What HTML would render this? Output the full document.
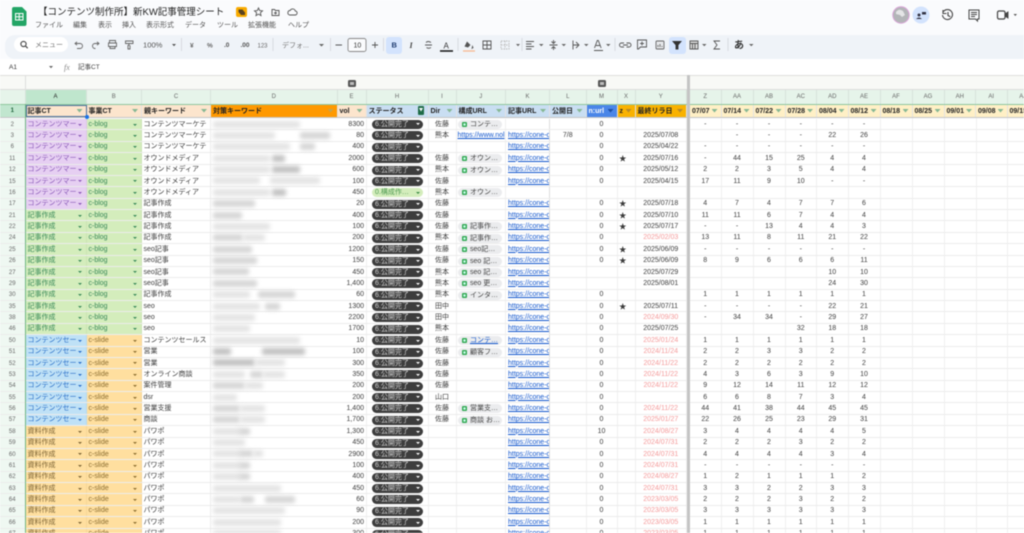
<!DOCTYPE html>
<html lang="ja"><head><meta charset="utf-8"><title>新KW記事管理シート</title>
<style>
*{box-sizing:border-box;margin:0;padding:0}
html,body{width:1024px;height:533px;overflow:hidden;background:#fff}
body{font:7px/11px "Liberation Sans","Noto Sans CJK JP",sans-serif;color:#333}
#w{position:relative;width:1024px;height:533px;overflow:hidden;filter:blur(.5px);background:#fafbfd}
.t{position:absolute;white-space:nowrap}
#bar{position:absolute;left:5px;top:34.5px;width:1019px;height:24px;background:#eff3f8;border-radius:10px 0 0 10px}
#sr{position:absolute;left:14px;top:37px;width:54px;height:15px;background:#fff;border-radius:8px}
#on1,#on2{position:absolute;top:36.5px;height:17px;background:#d3e3fd;border-radius:3px}
#on1{left:386px;width:16px}#on2{left:669px;width:17px}
#fb{position:absolute;left:0;top:59px;width:1024px;height:16px;background:#fff}
#ic{position:absolute;left:0;top:0}
#grp{position:absolute;left:0;top:75px;width:1024px;height:15px;background:#f8f9f6;border-top:1px solid #dfdfdc;border-bottom:1px solid #dcdcdc}
#grp0{position:absolute;left:25px;top:75px;width:1px;height:15px;background:#ddd}
.g{position:absolute;top:79.5px;width:7.5px;height:7.5px;background:#555;border-radius:1.5px}
.g:after{content:"";position:absolute;left:2px;top:2px;width:3.5px;height:3.5px;background:#bbb}
.r,#c,#h{display:grid;grid-template-columns:25.5px 61px 55.5px 69px 126.5px 29px 62px 28px 49.5px 44px 36.5px 31px 18px 51.5px 3px 31.5px 32px 32px 31.5px 31.5px 32px 32px 32px 31.5px 31.5px 31.5px;width:1039px}
#c{position:absolute;left:0;top:90px;height:14px;background:#e6f4ea;color:#666;font-size:6px;line-height:15px;text-align:center}
#c i{font-style:normal;border-right:1px solid #d6e3da}
#c i:nth-child(2){background:#bfe6cd;color:#222}
#h{position:absolute;left:0;top:104px;height:12.5px;font-weight:bold;line-height:11.5px;color:#222;border-top:1px solid #8fc79f}
#h i{font-style:normal;position:relative;padding:1px 0 0 2px;white-space:nowrap;overflow:hidden;border-right:1px solid #e2e2e2}
#h i:after{content:"";position:absolute;right:3px;top:4px;width:6px;height:3.5px;background:var(--f,#86b894);clip-path:polygon(0 0,100% 0,50% 100%)}
#h i:first-child:after,#h i:nth-child(15):after{display:none}
#h i:first-child{background:#c1e6cf;text-align:center;font-size:6px;color:#175c34;padding:1px 0 0}
.o{background:#fce5cd}.b{background:#c9def2}.y{background:#fff0c6}
#fz1{position:absolute;left:0;top:116.5px;width:1024px;height:1.7px;background:#c6c6c6}
#fz2{position:absolute;left:687px;top:75px;width:3px;height:458px;background:#c4c4c4}
#sel{position:absolute;left:25.5px;top:104.5px;width:61px;height:12px;border:1px solid #4a6f9b}
#dot{position:absolute;left:85px;top:114.5px;width:4px;height:4px;border-radius:50%;background:#1a73e8}
#d{position:absolute;left:0;top:119px;width:1024px}
.r{height:11.38px;border-bottom:1px solid #ececec;background:#fff;line-height:10.6px}
.r i{font-style:normal;position:relative;white-space:nowrap;overflow:hidden;padding:.7px 1.5px 0;color:#3c3c3c;border-right:1px solid #efefef;text-align:center}
.r i:first-child{background:#eff8f2;color:#666;font-size:6px;padding:.7px 0 0}
.r i:nth-child(2),.r i:nth-child(3),.r i:nth-child(4),.r i:nth-child(9),.r i:nth-child(10),.r i:nth-child(7){text-align:left}
.r i:nth-child(6){text-align:right}
.r i:nth-child(13){text-align:left;font-size:7.5px}
.r i:nth-child(5){overflow:visible;border:0}
.r i:nth-child(15){background:#c4c4c4;padding:0}
.r i:nth-child(7){padding:1px 0 0 5.5px}
.r i:nth-child(9){padding:1px 0 0 1px}
.r i:nth-child(10){padding-left:2px;border-right-color:#ddd}
i.p,i.gc,i.u,i.z,i.gb,i.gs{padding-left:2px!important;border-right-color:rgba(0,0,0,.04)!important}
i.p{background:#e6cff2;color:#8a5ab8!important}
i.gc{background:#d4edbc;color:#3a8a5a!important}
i.u{background:#bfe1f6;color:#2a6fc8!important}
i.z{background:#ffdf9f;color:#7d6536!important}
i.gb{background:#d4edbc;color:#3a8a5a!important}
i.gs{background:#ffdf9f;color:#8d6f32!important}
i.p:after,i.gc:after,i.u:after,i.z:after,i.gb:after,i.gs:after{content:"";position:absolute;right:3.5px;top:4.5px;border:solid transparent;border-width:2.6px 2px 0;border-top-color:currentColor}
i.gb:after,i.gs:after{right:4.5px}
.s,.v{display:block;width:51px;height:9px;border-radius:4.5px;background:#3d3d3d;color:#cfcfcf;font-weight:normal;line-height:9.5px;padding-left:3px;position:relative}
.v{background:#d4edbc;color:#4f9a52}
.s:after,.v:after{content:"";position:absolute;right:3.5px;top:3.4px;border:solid transparent;border-width:2.4px 2px 0;border-top-color:#fff}
.v:after{border-top-color:#3b8a45}
em{display:block;font-style:normal;width:44px;height:9px;border-radius:4.5px;background:#ebecee;color:#444;line-height:9.5px;padding-left:12.5px;position:relative}
em:before{content:"";position:absolute;left:4px;top:2px;width:5px;height:5px;border-radius:1px;background:#cfe;box-shadow:inset 0 0 0 1.4px #34a853}
a{color:#1155cc;text-decoration:underline}
.x{color:#f49a9a!important}
u{position:absolute;top:1.5px;height:7px;background:#e4e4e4;filter:blur(2.2px);text-decoration:none;border-radius:2px}
u.m{background:#d6d6d6}u.k{background:#c2c2c2}
.vl{position:absolute;top:118px;width:1px;height:415px;background:#efefef}
#lgrn{position:absolute;left:25px;top:104px;width:1px;height:429px;background:#6fb683}
</style></head><body><div id="w">
<div id="bar"></div><div id="sr"></div><div id="on1"></div><div id="on2"></div><div id="fb"></div>

<svg id="ic" width="1024" height="76" viewBox="0 0 1024 76" fill="none" stroke="#666" stroke-width=".9" font-family="'Liberation Sans','Noto Sans CJK JP',sans-serif">
<path d="M12 9q0-2 2-2h8l4.500 4.500V24q0 2-2 2H14q-2 0-2-2z" fill="#23a566" stroke="none"/>
<path d="M15.500 13.500h7.500v6.500h-7.500zM15.500 16.700h7.500M19.200 13.500v6.500" stroke="#fff" stroke-width="1"/>
<rect x="236" y="7" width="11" height="10" rx="2" fill="#f9ab00" stroke="none"/>
<path d="M238.500 9.500h4l2.500 3v2.500h-4l-2.500-3z" fill="#5a4320" stroke="none"/>
<path d="M258.500 8l1.200 2.600 2.800.3-2.100 1.900.6 2.800-2.500-1.500-2.500 1.500.6-2.800-2.100-1.900 2.800-.3z" stroke="#555"/>
<path d="M272 9.500h2.500l1 1h3.500v5h-7zM275.500 11.500v3M274 13h3" stroke="#555"/>
<path d="M289.500 15h5.500a2 2 0 0 0 .3-4 2.800 2.800 0 0 0-5.200-.5 2.300 2.300 0 0 0-.6 4.500z" stroke="#555"/>
<circle cx="23.500" cy="44" r="2.600" stroke="#444" stroke-width="1.100"/><path d="M25.500 46l2.200 2.200" stroke="#444" stroke-width="1.200"/>
<path d="M75.500 43.500h4.500a2.500 2.500 0 0 1 0 5h-3M77 41.800l-2 1.700 2 1.700"/>
<path d="M98.500 43.500h-3.500a2.500 2.500 0 0 0 0 5h.5M97 41.800l2 1.700-2 1.700"/>
<path d="M109.500 43v-2.500h6V43M108.500 43h8v3.500h-8zM110 46v2.500h5V46"/>
<path d="M125.500 41h7.500v2.500h-7.500zM129 43.500v1.800h-1v3.700h2v-3.700"/>
<path d="M172 44h4l-2 2.200z" fill="#555" stroke="none"/>
<path d="M181.500 38v13M273 38v13M330.500 38v13M383.500 38v13M458 38v13M522 38v13M615 38v13M728 38v13" stroke="#d5d8dd"/>
<path d="M319 44h5l-2.500 2.500zM516 44h4l-2 2.200zM539 44h4.500l-2.200 2.200zM561.500 44h4.500l-2.200 2.200zM584 44h4.500l-2.200 2.200zM606 44h4.500l-2.200 2.200zM702 44h4.500l-2.200 2.200zM749 44h4.500l-2.200 2.200z" fill="#666" stroke="none"/>
<path d="M335.500 45h6.500M372 45h6M375 42v6" stroke="#555"/>
<rect x="348" y="38.500" width="18" height="13" rx="2" stroke="#888" fill="#fafbfd"/>
<path d="M425 45h7M426 42.500q2-2 5 0M426.500 47.500q2 1.500 4.500 0" stroke="#555"/>
<path d="M440 51h13" stroke="#111" stroke-width="1.500"/>
<path d="M463 51h12" stroke="#f7b98f" stroke-width="1.300"/>
<path d="M467 41.500l3.500 3.500-2.500 2.500-3.500-1z" fill="#555" stroke="none"/><path d="M472.500 46.500l.5 1.200-.9.500z" fill="#555" stroke="#555"/>
<path d="M483 41h8v8h-8zM483 45h8M487 41v8" stroke="#555"/>
<path d="M501 41h8v8h-8zM505 41v8M501 45h8" stroke="#bbb" stroke-dasharray="1.500 1"/>
<path d="M526 41.500h8M526 44h5.500M526 46.500h8M526 49h5.500" stroke="#555"/>
<path d="M549.500 45h8M553.500 40v3M553.500 47v3M551.500 41.500l2 2 2-2M551.500 48.500l2-2 2 2" stroke="#555"/>
<path d="M573 40.500v9M576 42l3 3-3 3M573 45h5" stroke="#555"/>
<path d="M594.500 48l2.800-7.500h1l2.800 7.500M596 45.500h4M594 50.500h9" stroke="#555"/>
<path d="M624 43h-2.500a2 2 0 0 0 0 4h2.500M626.500 43h2.500a2 2 0 0 1 0 4h-2.500M623 45h5" stroke="#555"/>
<path d="M637.500 40h9v7h-6l-2 2h-1zM642 41.500v4M640 43.500h4" stroke="#555"/>
<rect x="656" y="41" width="8" height="8" rx="1" fill="#e5e7ea"/><path d="M658 47v-2M660 47v-3M662 47v-1" stroke="#666"/>
<path d="M673 41.500h8l-3 3.500v4h-2v-4z" fill="#333" stroke="#333"/>
<path d="M690 41h8v8h-8zM690 43.500h8M692.500 43.500V49M695 43.500V49" stroke="#555" fill="#ddd"/>
<path d="M720 41h-6l3 4-3 4h6" stroke="#555"/>
<circle cx="901" cy="15" r="8.200" fill="#b3b5b8" stroke="#d9a4d8" stroke-width="1"/><path d="M896 12q3-4 7-1l2 4-3 2-2-2-4-1z" fill="#e4e5e6" stroke="none"/>
<circle cx="921" cy="15" r="8.500" fill="#d3e3fd" stroke="none"/>
<circle cx="919" cy="15" r="1.500" fill="#334" stroke="none"/><path d="M916 19q3-3 6 0z" fill="#334" stroke="none"/><path d="M922 12h4v2.500h-4z" fill="#334" stroke="none"/>
<path d="M943.500 11.500a5 5 0 1 1-1 3.500M943 10v3.500h3.500M948 12v3.500l2.300 1.200" stroke="#444" stroke-width="1.100"/>
<path d="M969 10h10v9h-1.500v2l-2-2H969zM971 12.500h6M971 14.500h6M971 16.500h4" stroke="#444" stroke-width="1"/>
<rect x="997.500" y="11" width="7.500" height="8" rx="1.500" stroke="#444" stroke-width="1.200"/><path d="M1005 14l3-2v6l-3-2z" fill="#444" stroke="#444"/>
<path d="M1013.500 14h3.500l-1.700 2z" fill="#555" stroke="none"/>
<path d="M49 66h4l-2 2.300z" fill="#666" stroke="none"/>
<g stroke="none" fill="#555" font-size="7">
<text x="143" y="47.500" font-size="7.600">100%</text>
<text x="190" y="47.500" font-size="6.500" font-weight="bold" fill="#666">¥</text>
<text x="207" y="47.500" font-size="6.500" font-weight="bold" fill="#666">%</text>
<text x="224" y="47" font-size="6.500" font-weight="bold" fill="#555">.0</text>
<text x="240.500" y="47" font-size="6.500" font-weight="bold" fill="#555">.00</text>
<text x="257.500" y="47.500" font-size="6" fill="#666">123</text>
<text x="282" y="47.500" fill="#777">デフォ...</text>
<text x="353.500" y="47.500" fill="#333">10</text>
<text x="391.500" y="47.500" font-size="7.500" font-weight="bold" fill="#1d3a6e">B</text>
<text x="409.500" y="48" font-size="8" font-style="italic" font-family="'Liberation Serif',serif" font-weight="bold" fill="#444">I</text>
<text x="443.500" y="48.500" font-size="8" fill="#333">A</text>
<text x="734" y="48.500" font-size="10" font-weight="bold" fill="#333">あ</text>
<text x="64" y="70" font-size="8" font-style="italic" font-family="'Liberation Serif',serif" fill="#888">fx</text>
</g>
</svg>

<div class="t" style="left:38px;top:6.500px;font-size:9.5px;line-height:12px;color:#222">【コンテンツ制作所】新KW記事管理シート</div>
<div class="t" style="left:35px;top:19.500px;color:#555">ファイル</div>
<div class="t" style="left:73px;top:19.500px;color:#555">編集</div>
<div class="t" style="left:98px;top:19.500px;color:#555">表示</div>
<div class="t" style="left:122px;top:19.500px;color:#555">挿入</div>
<div class="t" style="left:146px;top:19.500px;color:#555">表示形式</div>
<div class="t" style="left:185px;top:19.500px;color:#555">データ</div>
<div class="t" style="left:217px;top:19.500px;color:#555">ツール</div>
<div class="t" style="left:248px;top:19.500px;color:#555">拡張機能</div>
<div class="t" style="left:288px;top:19.500px;color:#555">ヘルプ</div>
<div class="t" style="left:35px;top:39.500px;color:#777">メニュー</div>
<div class="t" style="left:9px;top:61.500px;color:#333;font-size:6.5px">A1</div>
<div class="t" style="left:78px;top:61.500px;color:#444;font-size:6.5px">記事CT</div>

<div id="grp"></div><div id="grp0"></div><div class="g" style="left:348px"></div><div class="g" style="left:598px"></div>

<div id="c"><i></i><i>A</i><i>B</i><i>C</i><i>D</i><i>E</i><i>H</i><i>I</i><i>J</i><i>K</i><i>L</i><i>M</i><i>X</i><i>Y</i><i style="background:#c4c4c4"></i><i>Z</i><i>AA</i><i>AB</i><i>AC</i><i>AD</i><i>AE</i><i>AF</i><i>AG</i><i>AH</i><i>AI</i><i>AJ</i></div>

<div id="h"><i>1</i><i class="o">記事CT</i><i class="o">事業CT</i><i class="o">親キーワード</i><i style="background:#ff9900;--f:#c9a24a">対策キーワード</i><i class="o">vol</i><i class="b" style="--f:transparent">ステータス</i><i class="b">Dir</i><i class="b">構成URL</i><i class="b">記事URL</i><i class="b">公開日</i><i style="background:#4a86e8;color:#fff;--f:#1d4fa3">n:url</i><i style="background:#f9b200;--f:#b58a2a">z</i><i style="background:#f9b200;--f:#b58a2a">最終リラ日</i><i style="background:#c4c4c4"></i><i class="y">07/07</i><i class="y">07/14</i><i class="y">07/22</i><i class="y">07/28</i><i class="y">08/04</i><i class="y">08/12</i><i class="y">08/18</i><i class="y">08/25</i><i class="y">09/01</i><i class="y">09/08</i><i class="y">09/15</i></div>
<div style="position:absolute;left:418px;top:105.500px;width:6px;height:9.500px;background:#1e6b47;border-radius:1px"></div>
<div style="position:absolute;left:419px;top:108px;width:4px;height:3.500px;background:#fff;clip-path:polygon(0 0,100% 0,50% 100%)"></div>

<div id="d">
<div class="r"><i>2</i><i class="p">コンテンツマー</i><i class="gb">c-blog</i><i>コンテンツマーケテ</i><i><u style="left:2px;width:87px"></u></i><i>8300</i><i><b class="s">6.公開完了</b></i><i>佐藤</i><i><em>コンテ…</em></i><i></i><i></i><i>0</i><i></i><i></i><i></i><i>-</i><i>-</i><i>-</i><i>-</i><i>-</i><i>-</i></div>
<div class="r"><i>3</i><i class="p">コンテンツマー</i><i class="gb">c-blog</i><i>コンテンツマーケテ</i><i><u style="left:2px;width:62px"></u><u class="m" style="left:89px;width:30px"></u></i><i>80</i><i><b class="s">6.公開完了</b></i><i>熊本</i><i><a>https://www.nol</a></i><i><a>https://cone-c</a></i><i>7/8</i><i>0</i><i></i><i>2025/07/08</i><i></i><i></i><i>-</i><i>-</i><i>-</i><i>22</i><i>26</i></div>
<div class="r"><i>6</i><i class="p">コンテンツマー</i><i class="gb">c-blog</i><i>コンテンツマーケテ</i><i><u style="left:2px;width:77px"></u><u class="m" style="left:89px;width:15px"></u></i><i>400</i><i><b class="s">6.公開完了</b></i><i></i><i></i><i><a>https://cone-c</a></i><i></i><i>0</i><i></i><i>2025/04/22</i><i></i><i>-</i><i>-</i><i>-</i><i>-</i><i>-</i><i>-</i></div>
<div class="r"><i>11</i><i class="p">コンテンツマー</i><i class="gb">c-blog</i><i>オウンドメディア</i><i><u style="left:2px;width:57px"></u><u class="k" style="left:61px;width:13px"></u></i><i>2000</i><i><b class="s">6.公開完了</b></i><i>佐藤</i><i><em>オウン…</em></i><i><a>https://cone-c</a></i><i></i><i>0</i><i>★</i><i>2025/07/16</i><i></i><i>-</i><i>44</i><i>15</i><i>25</i><i>4</i><i>4</i></div>
<div class="r"><i>12</i><i class="p">コンテンツマー</i><i class="gb">c-blog</i><i>オウンドメディア</i><i><u style="left:2px;width:57px"></u><u class="k" style="left:61px;width:28px"></u></i><i>600</i><i><b class="s">6.公開完了</b></i><i>熊本</i><i><em>オウン…</em></i><i><a>https://cone-c</a></i><i></i><i>0</i><i></i><i>2025/05/12</i><i></i><i>2</i><i>2</i><i>3</i><i>5</i><i>4</i><i>4</i></div>
<div class="r"><i>15</i><i class="p">コンテンツマー</i><i class="gb">c-blog</i><i>オウンドメディア</i><i><u style="left:2px;width:47px"></u><u style="left:59px;width:50px"></u></i><i>100</i><i><b class="s">6.公開完了</b></i><i>佐藤</i><i></i><i><a>https://cone-c</a></i><i></i><i>0</i><i></i><i>2025/04/15</i><i></i><i>17</i><i>11</i><i>9</i><i>10</i><i>-</i><i>-</i></div>
<div class="r"><i>16</i><i class="p">コンテンツマー</i><i class="gb">c-blog</i><i>オウンドメディア</i><i><u style="left:2px;width:57px"></u><u class="k" style="left:61px;width:14px"></u></i><i>450</i><i><b class="v">0.構成作…</b></i><i>熊本</i><i><em>オウン…</em></i><i></i><i></i><i></i><i></i><i></i><i></i><i></i><i></i><i></i><i></i><i></i><i></i></div>
<div class="r"><i>17</i><i class="p">コンテンツマー</i><i class="gb">c-blog</i><i>記事作成</i><i><u class="m" style="left:2px;width:42px"></u></i><i>20</i><i><b class="s">6.公開完了</b></i><i>佐藤</i><i></i><i><a>https://cone-c</a></i><i></i><i>0</i><i>★</i><i>2025/07/18</i><i></i><i>4</i><i>7</i><i>4</i><i>7</i><i>7</i><i>6</i></div>
<div class="r"><i>21</i><i class="gc">記事作成</i><i class="gb">c-blog</i><i>記事作成</i><i><u class="m" style="left:2px;width:29px"></u></i><i>400</i><i><b class="s">6.公開完了</b></i><i>佐藤</i><i></i><i><a>https://cone-c</a></i><i></i><i>0</i><i>★</i><i>2025/07/10</i><i></i><i>11</i><i>11</i><i>6</i><i>7</i><i>4</i><i>4</i></div>
<div class="r"><i>22</i><i class="gc">記事作成</i><i class="gb">c-blog</i><i>記事作成</i><i><u style="left:2px;width:57px"></u></i><i>100</i><i><b class="s">6.公開完了</b></i><i>佐藤</i><i><em>記事作…</em></i><i><a>https://cone-c</a></i><i></i><i>0</i><i>★</i><i>2025/07/17</i><i></i><i>-</i><i>-</i><i>13</i><i>4</i><i>4</i><i>3</i></div>
<div class="r"><i>24</i><i class="gc">記事作成</i><i class="gb">c-blog</i><i>記事作成</i><i><u class="m" style="left:2px;width:30px"></u><u style="left:32px;width:22px"></u></i><i>200</i><i><b class="s">6.公開完了</b></i><i>熊本</i><i><em>記事作…</em></i><i><a>https://cone-c</a></i><i></i><i>0</i><i></i><i class="x">2025/02/03</i><i></i><i>13</i><i>11</i><i>8</i><i>11</i><i>21</i><i>22</i></div>
<div class="r"><i>25</i><i class="gc">記事作成</i><i class="gb">c-blog</i><i>seo記事</i><i><u class="m" style="left:2px;width:39px"></u></i><i>1200</i><i><b class="s">6.公開完了</b></i><i>佐藤</i><i><em>seo記…</em></i><i><a>https://cone-c</a></i><i></i><i>0</i><i>★</i><i>2025/06/09</i><i></i><i>-</i><i>-</i><i>-</i><i>-</i><i>-</i><i>-</i></div>
<div class="r"><i>26</i><i class="gc">記事作成</i><i class="gb">c-blog</i><i>seo記事</i><i><u class="m" style="left:2px;width:44px"></u></i><i>150</i><i><b class="s">6.公開完了</b></i><i>佐藤</i><i><em>seo 記…</em></i><i><a>https://cone-c</a></i><i></i><i>0</i><i>★</i><i>2025/06/09</i><i></i><i>8</i><i>9</i><i>6</i><i>6</i><i>6</i><i>11</i></div>
<div class="r"><i>27</i><i class="gc">記事作成</i><i class="gb">c-blog</i><i>seo記事</i><i><u class="m" style="left:2px;width:36px"></u></i><i>450</i><i><b class="s">6.公開完了</b></i><i>熊本</i><i><em>seo 記…</em></i><i><a>https://cone-c</a></i><i></i><i></i><i></i><i>2025/07/29</i><i></i><i></i><i></i><i></i><i></i><i>10</i><i>10</i></div>
<div class="r"><i>29</i><i class="gc">記事作成</i><i class="gb">c-blog</i><i>seo記事</i><i><u class="m" style="left:2px;width:44px"></u></i><i>1,400</i><i><b class="s">6.公開完了</b></i><i>熊本</i><i><em>seo 更…</em></i><i><a>https://cone-c</a></i><i></i><i></i><i></i><i>2025/08/01</i><i></i><i></i><i></i><i></i><i></i><i>24</i><i>30</i></div>
<div class="r"><i>30</i><i class="gc">記事作成</i><i class="gb">c-blog</i><i>記事作成</i><i><u style="left:2px;width:37px"></u><u class="m" style="left:47px;width:37px"></u></i><i>60</i><i><b class="s">6.公開完了</b></i><i>熊本</i><i><em>インタ…</em></i><i><a>https://cone-c</a></i><i></i><i>0</i><i></i><i></i><i></i><i>1</i><i>1</i><i>1</i><i>1</i><i>1</i><i>1</i></div>
<div class="r"><i>35</i><i class="gc">記事作成</i><i class="gb">c-blog</i><i>seo</i><i><u style="left:2px;width:47px"></u><u class="m" style="left:54px;width:15px"></u></i><i>1300</i><i><b class="s">6.公開完了</b></i><i>田中</i><i></i><i><a>https://cone-c</a></i><i></i><i>0</i><i>★</i><i>2025/07/11</i><i></i><i>-</i><i>-</i><i>-</i><i>-</i><i>22</i><i>21</i></div>
<div class="r"><i>38</i><i class="gc">記事作成</i><i class="gb">c-blog</i><i>seo</i><i><u style="left:2px;width:42px"></u></i><i>2200</i><i><b class="s">6.公開完了</b></i><i>田中</i><i></i><i><a>https://cone-c</a></i><i></i><i>0</i><i></i><i class="x">2024/09/30</i><i></i><i>-</i><i>34</i><i>34</i><i>-</i><i>29</i><i>27</i></div>
<div class="r"><i>46</i><i class="gc">記事作成</i><i class="gb">c-blog</i><i>seo</i><i><u style="left:2px;width:37px"></u></i><i>1700</i><i><b class="s">6.公開完了</b></i><i>熊本</i><i></i><i><a>https://cone-c</a></i><i></i><i>0</i><i></i><i>2025/07/25</i><i></i><i></i><i></i><i></i><i>32</i><i>18</i><i>18</i></div>
<div class="r"><i>50</i><i class="u">コンテンツセー</i><i class="gs">c-slide</i><i>コンテンツセールス</i><i><u style="left:2px;width:87px"></u></i><i>10</i><i><b class="s">6.公開完了</b></i><i>佐藤</i><i><em style="color:#1155cc;text-decoration:underline">コンテ…</em></i><i><a>https://cone-c</a></i><i></i><i>0</i><i></i><i class="x">2025/01/24</i><i></i><i>1</i><i>1</i><i>1</i><i>1</i><i>1</i><i>1</i></div>
<div class="r"><i>51</i><i class="u">コンテンツセー</i><i class="gs">c-slide</i><i>営業</i><i><u class="k" style="left:2px;width:18px"></u><u class="k" style="left:51px;width:43px"></u></i><i>100</i><i><b class="s">6.公開完了</b></i><i>佐藤</i><i><em>顧客フ…</em></i><i><a>https://cone-c</a></i><i></i><i>0</i><i></i><i class="x">2024/11/24</i><i></i><i>2</i><i>2</i><i>3</i><i>3</i><i>2</i><i>2</i></div>
<div class="r"><i>52</i><i class="u">コンテンツセー</i><i class="gs">c-slide</i><i>営業</i><i><u class="k" style="left:2px;width:42px"></u><u style="left:44px;width:30px"></u></i><i>300</i><i><b class="s">6.公開完了</b></i><i>佐藤</i><i></i><i><a>https://cone-c</a></i><i></i><i>0</i><i></i><i class="x">2024/11/22</i><i></i><i>2</i><i>2</i><i>2</i><i>2</i><i>2</i><i>2</i></div>
<div class="r"><i>53</i><i class="u">コンテンツセー</i><i class="gs">c-slide</i><i>オンライン商談</i><i><u style="left:2px;width:32px"></u><u class="m" style="left:39px;width:13px"></u><u style="left:52px;width:22px"></u></i><i>350</i><i><b class="s">6.公開完了</b></i><i>佐藤</i><i></i><i><a>https://cone-c</a></i><i></i><i>0</i><i></i><i class="x">2024/11/22</i><i></i><i>4</i><i>3</i><i>6</i><i>3</i><i>9</i><i>10</i></div>
<div class="r"><i>54</i><i class="u">コンテンツセー</i><i class="gs">c-slide</i><i>案件管理</i><i><u class="m" style="left:2px;width:32px"></u><u style="left:34px;width:18px"></u></i><i>200</i><i><b class="s">6.公開完了</b></i><i>佐藤</i><i></i><i><a>https://cone-c</a></i><i></i><i>0</i><i></i><i class="x">2024/11/22</i><i></i><i>9</i><i>12</i><i>14</i><i>11</i><i>12</i><i>12</i></div>
<div class="r"><i>55</i><i class="u">コンテンツセー</i><i class="gs">c-slide</i><i>dsr</i><i><u style="left:2px;width:24px"></u></i><i>200</i><i><b class="s">6.公開完了</b></i><i>山口</i><i></i><i><a>https://cone-c</a></i><i></i><i>0</i><i></i><i></i><i></i><i>6</i><i>6</i><i>8</i><i>7</i><i>3</i><i>4</i></div>
<div class="r"><i>56</i><i class="u">コンテンツセー</i><i class="gs">c-slide</i><i>営業支援</i><i><u class="m" style="left:2px;width:27px"></u><u style="left:29px;width:25px"></u></i><i>1,400</i><i><b class="s">6.公開完了</b></i><i>佐藤</i><i><em>営業支…</em></i><i><a>https://cone-c</a></i><i></i><i>0</i><i></i><i class="x">2024/11/22</i><i></i><i>44</i><i>41</i><i>38</i><i>44</i><i>45</i><i>45</i></div>
<div class="r"><i>57</i><i class="u">コンテンツセー</i><i class="gs">c-slide</i><i>商談</i><i><u class="m" style="left:2px;width:27px"></u><u style="left:29px;width:25px"></u></i><i>1,700</i><i><b class="s">6.公開完了</b></i><i>佐藤</i><i><em>商談 お…</em></i><i><a>https://cone-c</a></i><i></i><i>0</i><i></i><i class="x">2025/01/27</i><i></i><i>22</i><i>26</i><i>25</i><i>23</i><i>29</i><i>31</i></div>
<div class="r"><i>58</i><i class="z">資料作成</i><i class="gs">c-slide</i><i>パワポ</i><i><u style="left:2px;width:28px"></u><u class="m" style="left:28px;width:11px"></u></i><i>1,300</i><i><b class="s">6.公開完了</b></i><i></i><i></i><i><a>https://cone-c</a></i><i></i><i>10</i><i></i><i class="x">2024/08/27</i><i></i><i>3</i><i>4</i><i>4</i><i>4</i><i>4</i><i>5</i></div>
<div class="r"><i>59</i><i class="z">資料作成</i><i class="gs">c-slide</i><i>パワポ</i><i><u style="left:2px;width:32px"></u></i><i>450</i><i><b class="s">6.公開完了</b></i><i></i><i></i><i><a>https://cone-c</a></i><i></i><i>0</i><i></i><i class="x">2024/07/31</i><i></i><i>2</i><i>2</i><i>2</i><i>3</i><i>2</i><i>2</i></div>
<div class="r"><i>60</i><i class="z">資料作成</i><i class="gs">c-slide</i><i>パワポ</i><i><u style="left:2px;width:28px"></u><u class="m" style="left:28px;width:14px"></u><u style="left:42px;width:10px"></u></i><i>2900</i><i><b class="s">6.公開完了</b></i><i></i><i></i><i><a>https://cone-c</a></i><i></i><i>0</i><i></i><i class="x">2024/07/31</i><i></i><i>4</i><i>4</i><i>4</i><i>4</i><i>3</i><i>4</i></div>
<div class="r"><i>61</i><i class="z">資料作成</i><i class="gs">c-slide</i><i>パワポ</i><i><u style="left:2px;width:28px"></u><u class="m" style="left:28px;width:11px"></u></i><i>100</i><i><b class="s">6.公開完了</b></i><i></i><i></i><i><a>https://cone-c</a></i><i></i><i>0</i><i></i><i class="x">2024/07/31</i><i></i><i>-</i><i>-</i><i>-</i><i>-</i><i>-</i><i>-</i></div>
<div class="r"><i>62</i><i class="z">資料作成</i><i class="gs">c-slide</i><i>パワポ</i><i><u style="left:2px;width:28px"></u><u class="m" style="left:28px;width:11px"></u></i><i>400</i><i><b class="s">6.公開完了</b></i><i></i><i></i><i><a>https://cone-c</a></i><i></i><i>0</i><i></i><i class="x">2024/08/27</i><i></i><i>1</i><i>2</i><i>1</i><i>1</i><i>1</i><i>2</i></div>
<div class="r"><i>63</i><i class="z">資料作成</i><i class="gs">c-slide</i><i>パワポ</i><i><u style="left:2px;width:68px"></u></i><i>450</i><i><b class="s">6.公開完了</b></i><i></i><i></i><i><a>https://cone-c</a></i><i></i><i>0</i><i></i><i class="x">2024/07/31</i><i></i><i>3</i><i>3</i><i>2</i><i>2</i><i>3</i><i>3</i></div>
<div class="r"><i>64</i><i class="z">資料作成</i><i class="gs">c-slide</i><i>パワポ</i><i><u style="left:2px;width:27px"></u><u class="m" style="left:29px;width:14px"></u><u class="m" style="left:54px;width:30px"></u></i><i>60</i><i><b class="s">6.公開完了</b></i><i></i><i></i><i><a>https://cone-c</a></i><i></i><i>0</i><i></i><i class="x">2023/03/05</i><i></i><i>2</i><i>2</i><i>2</i><i>3</i><i>2</i><i>2</i></div>
<div class="r"><i>65</i><i class="z">資料作成</i><i class="gs">c-slide</i><i>パワポ</i><i><u style="left:2px;width:72px"></u></i><i>90</i><i><b class="s">6.公開完了</b></i><i></i><i></i><i><a>https://cone-c</a></i><i></i><i>0</i><i></i><i class="x">2023/03/05</i><i></i><i>3</i><i>3</i><i>3</i><i>3</i><i>3</i><i>3</i></div>
<div class="r"><i>66</i><i class="z">資料作成</i><i class="gs">c-slide</i><i>パワポ</i><i><u style="left:2px;width:68px"></u></i><i>200</i><i><b class="s">6.公開完了</b></i><i></i><i></i><i><a>https://cone-c</a></i><i></i><i>0</i><i></i><i class="x">2023/03/05</i><i></i><i>1</i><i>1</i><i>1</i><i>1</i><i>1</i><i>1</i></div>
<div class="r"><i>67</i><i class="z">資料作成</i><i class="gs">c-slide</i><i>パワポ</i><i><u style="left:2px;width:68px"></u></i><i>300</i><i><b class="s">6.公開完了</b></i><i></i><i></i><i><a>https://cone-c</a></i><i></i><i>0</i><i></i><i class="x">2023/03/05</i><i></i><i>1</i><i>1</i><i>1</i><i>1</i><i>1</i><i>1</i></div>
</div>

<div class="vl" style="left:912px"></div><div class="vl" style="left:944px"></div><div class="vl" style="left:975.5px"></div><div class="vl" style="left:1007px"></div>
<div id="fz1"></div><div id="fz2"></div><div id="lgrn"></div><div id="sel"></div><div id="dot"></div>
</div></body></html>
